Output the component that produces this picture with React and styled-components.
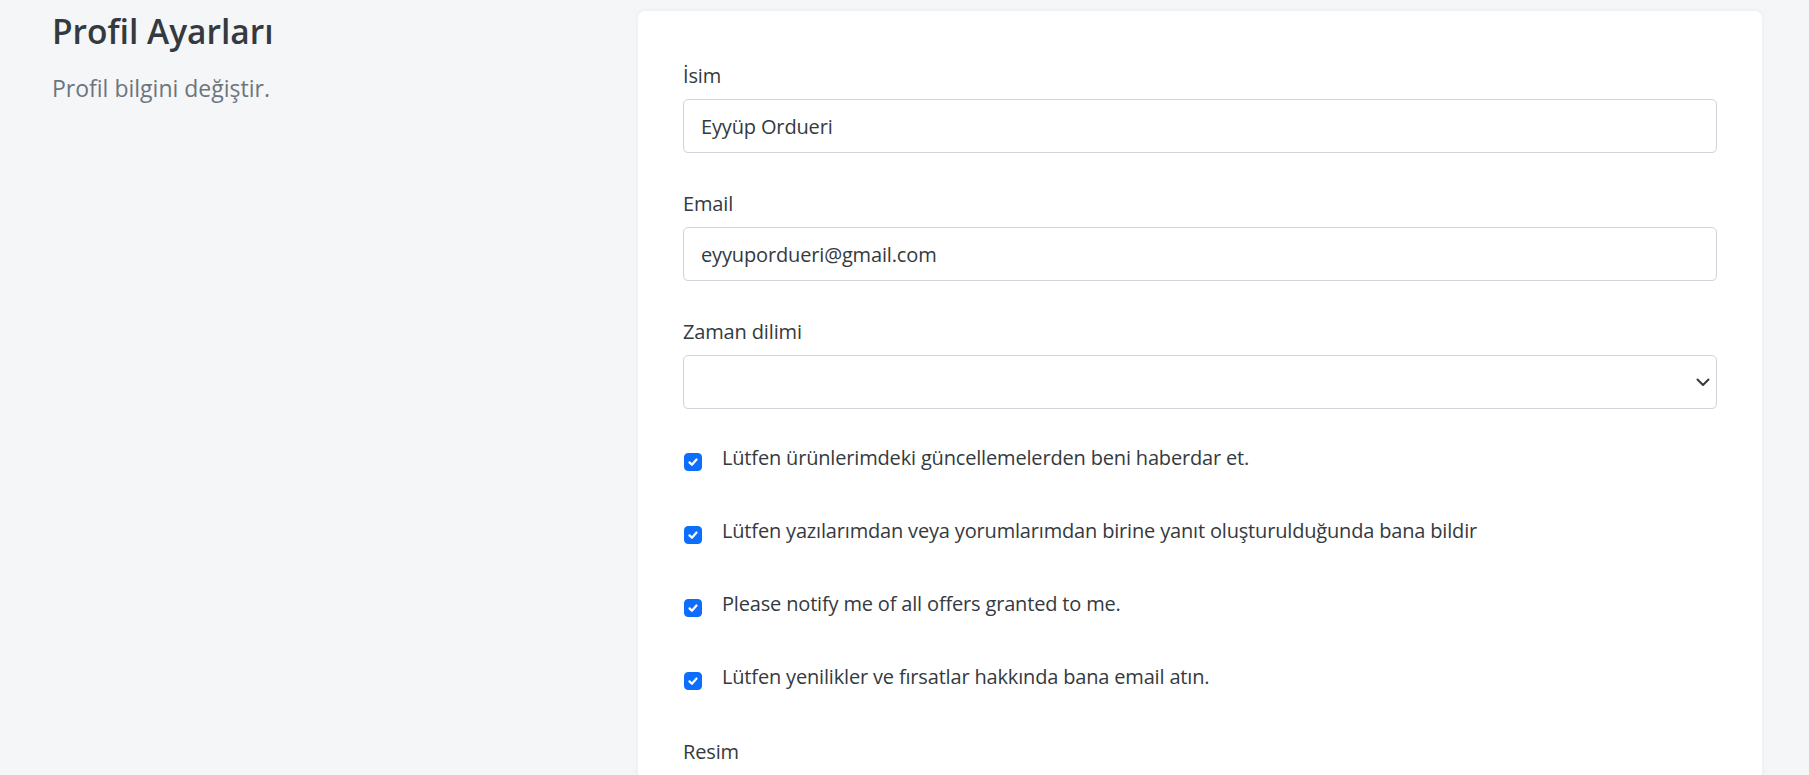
import styled, { createGlobalStyle } from "styled-components";

const GlobalStyle = createGlobalStyle`
  body {
    margin: 0;
    background: #f5f6f8;
    font-family: "Open Sans", "Noto Sans", sans-serif;
    color: #343a40;
  }
`;

const options = [
  "Lütfen ürünlerimdeki güncellemelerden beni haberdar et.",
  "Lütfen yazılarımdan veya yorumlarımdan birine yanıt oluşturulduğunda bana bildir",
  "Please notify me of all offers granted to me.",
  "Lütfen yenilikler ve fırsatlar hakkında bana email atın.",
];

const Page = styled.div`
  display: flex;
  padding: 11px 47px 0 52px;
  min-height: 775px;
  box-sizing: border-box;
`;

const Aside = styled.div`
  flex: 0 0 586px;
`;

const Title = styled.h3`
  margin: 0 0 20px;
  font-size: 33.5px;
  font-weight: 600;
  line-height: 1.2;
  color: #343a40;
`;

const Subtitle = styled.p`
  margin: 0;
  font-size: 23px;
  line-height: 1.5;
  color: #6c757d;
`;

const Card = styled.div`
  flex: 1;
  background: #fff;
  border-radius: 7px;
  box-shadow: 0 0 6px rgba(0, 0, 0, 0.05);
  padding: 50px 45px 60px 45px;
`;

const Group = styled.div`
  margin-bottom: 36px;
`;

const Label = styled.label`
  display: block;
  font-size: 20px;
  line-height: 30px;
  letter-spacing: -0.15px;
  margin-bottom: 8px;
  color: #343a40;
`;

const Input = styled.input`
  display: block;
  width: 100%;
  height: 54px;
  box-sizing: border-box;
  padding: 0 17px;
  border: 1px solid #ced4da;
  border-radius: 5px;
  font-family: inherit;
  font-size: 20px;
  letter-spacing: -0.15px;
  color: #343a40;
  background: #fff;
  outline: none;
`;

const SelectWrap = styled.div`
  position: relative;
`;

const Select = styled.select`
  display: block;
  width: 100%;
  height: 54px;
  box-sizing: border-box;
  padding: 0 17px;
  border: 1px solid #ced4da;
  border-radius: 5px;
  font-family: inherit;
  font-size: 20px;
  background: #fff;
  appearance: none;
  outline: none;
`;

const Chevron = styled.svg`
  position: absolute;
  right: 7px;
  top: 50%;
  margin-top: -4px;
  pointer-events: none;
`;

const CheckList = styled.div`
  margin-top: 34px;
`;

const CheckRow = styled.label`
  display: flex;
  align-items: flex-start;
  gap: 20px;
  margin-bottom: 43px;
  padding-left: 1px;
  font-size: 20px;
  line-height: 30px;
  letter-spacing: -0.17px;
  color: #343a40;
`;

const Box = styled.span`
  flex: 0 0 18px;
  height: 18px;
  margin-top: 10px;
  border-radius: 4px;
  background: ${(p) => (p.checked ? "#0d6efd" : "#fff")};
  border: 1px solid ${(p) => (p.checked ? "#0d6efd" : "#ced4da")};
  box-sizing: border-box;
  display: flex;
  align-items: center;
  justify-content: center;
`;

const ImageField = styled.div`
  padding-top: 2px;
`;

const App = () => {
  return (
    <>
      <GlobalStyle />
      <Page>
        <Aside>
          <Title>Profil Ayarları</Title>
          <Subtitle>Profil bilgini değiştir.</Subtitle>
        </Aside>
        <Card>
          <Group>
            <Label>İsim</Label>
            <Input defaultValue="Eyyüp Ordueri" />
          </Group>
          <Group>
            <Label>Email</Label>
            <Input defaultValue="eyyupordueri@gmail.com" />
          </Group>
          <div>
            <Label>Zaman dilimi</Label>
            <SelectWrap>
              <Select defaultValue="">
                <option value=""></option>
              </Select>
              <Chevron width="14" height="9" viewBox="0 0 14 9">
                <path
                  d="M1.5 1.5l5.5 5.5 5.5-5.5"
                  fill="none"
                  stroke="#343a40"
                  strokeWidth="2"
                  strokeLinecap="round"
                  strokeLinejoin="round"
                />
              </Chevron>
            </SelectWrap>
          </div>
          <CheckList>
            {options.map((text) => (
              <CheckRow key={text}>
                <Box checked>
                  <svg width="14" height="14" viewBox="0 0 20 20">
                    <path
                      d="M5 10.5l3.5 3.5 6.5-7.5"
                      fill="none"
                      stroke="#fff"
                      strokeWidth="3.2"
                      strokeLinecap="round"
                      strokeLinejoin="round"
                    />
                  </svg>
                </Box>
                <span>{text}</span>
              </CheckRow>
            ))}
          </CheckList>
          <ImageField>
            <Label>Resim</Label>
          </ImageField>
        </Card>
      </Page>
    </>
  );
};

export default App;
